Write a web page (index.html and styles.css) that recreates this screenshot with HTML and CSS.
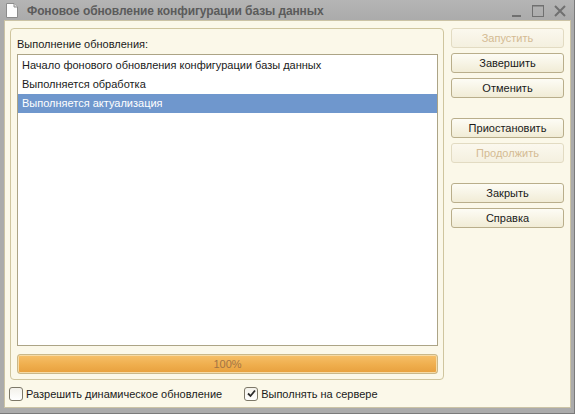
FILE: index.html
```html
<!DOCTYPE html>
<html>
<head>
<meta charset="utf-8">
<link rel="stylesheet" href="styles.css">
</head>
<body>
<div class="window">
  <div class="titlebar">
    <svg class="doc-icon" width="14" height="17" viewBox="0 0 14 17">
      <path d="M1.5 1.5 H9 L12.5 5 V15.5 H1.5 Z" fill="#fdfdfd" stroke="#8c8c8c"/>
      <path d="M9 1.5 V5 H12.5" fill="#e0e0e0" stroke="#8c8c8c"/>
    </svg>
    <span class="title">Фоновое обновление конфигурации базы данных</span>
    <div class="controls">
      <svg width="12" height="14" viewBox="0 0 12 14"><rect x="1" y="11" width="9" height="2" fill="#707070"/></svg>
      <svg width="14" height="14" viewBox="0 0 14 14"><rect x="1.5" y="1.5" width="11" height="11" fill="none" stroke="#707070" stroke-width="1"/><rect x="1.5" y="1.5" width="11" height="1" fill="#707070"/></svg>
      <svg width="14" height="14" viewBox="0 0 14 14"><path d="M2 2 L12 12 M12 2 L2 12" stroke="#707070" stroke-width="2"/></svg>
    </div>
  </div>
  <div class="client">
    <div class="main">
      <div class="group">
        <div class="group-label">Выполнение обновления:</div>
        <div class="list">
          <div class="row">Начало фонового обновления конфигурации базы данных</div>
          <div class="row">Выполняется обработка</div>
          <div class="row selected">Выполняется актуализация</div>
        </div>
        <div class="progress"><span>100%</span></div>
      </div>
      <div class="checks">
        <label class="check check-dyn"><span class="box"></span>Разрешить динамическое обновление</label>
        <label class="check"><span class="box checked"><svg width="11" height="11" viewBox="0 0 11 11"><path d="M2 5.5 L4.5 8 L9 2.5" fill="none" stroke="#2a2a2a" stroke-width="1.8"/></svg></span>Выполнять на сервере</label>
      </div>
    </div>
    <div class="buttons">
      <div class="btn disabled">Запустить</div>
      <div class="btn">Завершить</div>
      <div class="btn">Отменить</div>
      <div class="btn gap">Приостановить</div>
      <div class="btn disabled">Продолжить</div>
      <div class="btn gap">Закрыть</div>
      <div class="btn">Справка</div>
    </div>
  </div>
</div>
</body>
</html>
```
FILE: styles.css
```css
html, body {
  margin: 0;
  padding: 0;
}
body {
  font-family: "Liberation Sans", Arial, sans-serif;
  font-size: 11px;
  color: #1a1a1a;
}
.window {
  width: 575px;
  height: 414px;
  box-sizing: border-box;
  background: #ababab;
  border-right: 1px solid #7a7a7a;
  border-bottom: 1px solid #7a7a7a;
  display: flex;
  flex-direction: column;
}
.titlebar {
  height: 22px;
  display: flex;
  align-items: center;
  padding-left: 5px;
  background: linear-gradient(#b5b5b5, #ababab);
}
.doc-icon {
  margin-top: 1px;
}
.title {
  margin-left: 8px;
  margin-top: 2px;
  font-weight: bold;
  color: #5b5b5b;
  font-size: 12px;
  letter-spacing: -0.1px;
  flex: 1;
}
.controls {
  display: flex;
  gap: 8px;
  align-items: center;
  margin-right: 7px;
  margin-top: 1px;
}
.client {
  flex: 1;
  margin: 0 3px 5px 4px;
  background: #fbf8e9;
  border: 1px solid #cbc3a5;
  display: flex;
  padding: 7px 6px 0 5px;
  gap: 7px;
}
.main {
  width: 434px;
  display: flex;
  flex-direction: column;
}
.group {
  height: 352px;
  box-sizing: border-box;
  border: 1px solid #cfc59e;
  border-radius: 4px;
  padding: 8px 5px 0 6px;
}
.group-label {
  height: 17px;
  line-height: 14px;
}
.list {
  height: 292px;
  box-sizing: border-box;
  background: #fff;
  border: 1px solid #aca486;
  padding-top: 1px;
}
.row {
  height: 19px;
  line-height: 19px;
  padding-left: 4px;
}
.row.selected {
  background: #6f97cd;
  color: #fff;
}
.progress {
  margin-top: 8px;
  height: 20px;
  box-sizing: border-box;
  border: 1px solid #c9b88a;
  border-radius: 3px;
  box-shadow: inset 0 0 0 1px #f6dba6;
  background: linear-gradient(#f6c06a, #efae4d 55%, #e7a03e);
  display: flex;
  align-items: center;
  justify-content: center;
  color: #a27444;
  font-size: 11px;
}
.checks {
  display: flex;
  align-items: center;
  height: 27px;
  gap: 22px;
}
.check {
  display: flex;
  align-items: center;
  gap: 3px;
}
.check-dyn {
  margin-left: -1px;
}
.box {
  width: 12px;
  height: 12px;
  border: 1px solid #7d7868;
  border-radius: 3px;
  background: linear-gradient(#f3f1ea, #ffffff);
  display: flex;
  align-items: center;
  justify-content: center;
}
.buttons {
  width: 113px;
  display: flex;
  flex-direction: column;
  gap: 5px;
}
.btn {
  height: 20px;
  box-sizing: border-box;
  border: 1px solid #b9ae8b;
  border-radius: 3px;
  background: linear-gradient(#fdfcf5, #f1ecd6);
  display: flex;
  align-items: center;
  justify-content: center;
  font-size: 11px;
  color: #1a1a1a;
}
.btn.disabled {
  color: #d4bb93;
  border-color: #e2dbc2;
  background: linear-gradient(#fbf8ee, #f4f0df);
}
.btn.gap {
  margin-top: 15px;
}
```
